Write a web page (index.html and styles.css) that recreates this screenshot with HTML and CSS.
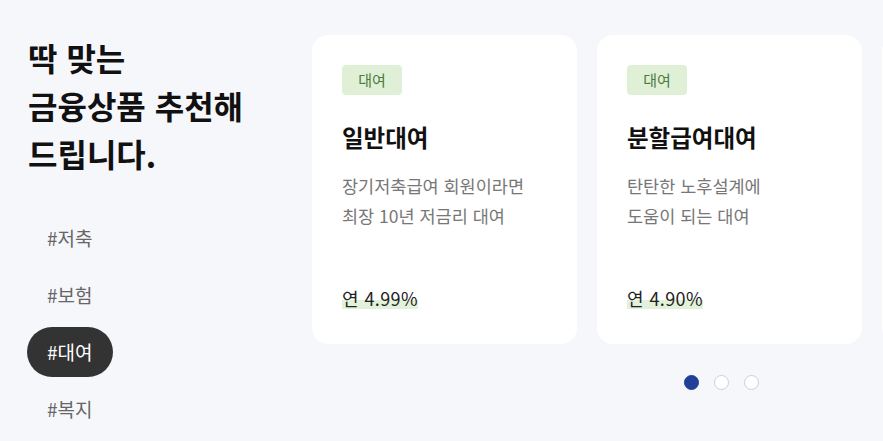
FILE: index.html
```html
<!DOCTYPE html>
<html lang="ko">
<head>
<meta charset="utf-8">
<link rel="stylesheet" href="styles.css">
</head>
<body>
<div class="page">
  <aside class="side">
    <h2 class="headline">딱 맞는<br>금융상품 추천해<br>드립니다.</h2>
    <ul class="menu">
      <li class="menu-item">#저축</li>
      <li class="menu-item">#보험</li>
      <li class="menu-item active">#대여</li>
      <li class="menu-item">#복지</li>
    </ul>
  </aside>
  <section class="carousel">
    <div class="track">
      <article class="card">
        <span class="tag">대여</span>
        <h3 class="card-title">일반대여</h3>
        <p class="card-desc">장기저축급여 회원이라면<br>최장 10년 저금리 대여</p>
        <div class="rate"><span class="rate-mark">연 4.99%</span></div>
      </article>
      <article class="card">
        <span class="tag">대여</span>
        <h3 class="card-title">분할급여대여</h3>
        <p class="card-desc">탄탄한 노후설계에<br>도움이 되는 대여</p>
        <div class="rate"><span class="rate-mark">연 4.90%</span></div>
      </article>
      <article class="card card-peek" aria-hidden="true"></article>
    </div>
    <div class="dots">
      <span class="dot on"></span>
      <span class="dot"></span>
      <span class="dot"></span>
    </div>
  </section>
</div>
</body>
</html>
```
FILE: styles.css
```css
* { box-sizing: border-box; }
html, body {
  margin: 0;
  padding: 0;
  background: #f6f7fb;
  font-family: "Noto Sans CJK KR", "Noto Sans", sans-serif;
  overflow: hidden;
}
.page {
  display: flex;
  width: 883px;
  height: 441px;
  overflow: hidden;
}
.side {
  width: 312px;
  flex: none;
  padding-left: 27px;
}
.headline {
  margin: 33px 0 0 1px;
  font-size: 32px;
  line-height: 48px;
  font-weight: 700;
  color: #111;
  letter-spacing: 0;
}
.menu {
  list-style: none;
  margin: 36px 0 0;
  padding: 0;
  display: flex;
  flex-direction: column;
  align-items: flex-start;
  gap: 7px;
}
.menu-item {
  height: 50px;
  line-height: 50px;
  padding: 0 20px;
  font-size: 19px;
  color: #666;
  border-radius: 25px;
}
.menu-item.active {
  background: #333;
  color: #fff;
}
.carousel {
  flex: 1;
  min-width: 0;
  padding-top: 35px;
}
.track {
  display: flex;
  gap: 20px;
}
.card {
  flex: none;
  width: 265px;
  height: 309px;
  background: #fff;
  border-radius: 16px;
  padding: 30px 30px 33px;
  display: flex;
  flex-direction: column;
  align-items: flex-start;
}
.tag {
  display: inline-block;
  width: 60px;
  height: 30px;
  line-height: 30px;
  text-align: center;
  font-size: 15px;
  color: #4d7a40;
  background: #dff0d7;
  border-radius: 4px;
}
.card-title {
  margin: 27px 0 0;
  font-size: 23.5px;
  line-height: 30px;
  font-weight: 700;
  color: #111;
}
.card-desc {
  margin: 19px 0 0;
  font-size: 17.5px;
  line-height: 30px;
  color: #777;
}
.rate {
  margin-top: auto;
}
.rate-mark {
  display: inline-block;
  font-size: 18px;
  line-height: 22px;
  color: #222;
  letter-spacing: 0.4px;
  background: linear-gradient(transparent 60%, #e2f1da 60%);
}
.dots {
  display: flex;
  gap: 15px;
  margin-top: 31px;
  padding-left: 372px;
}
.dot {
  width: 15px;
  height: 15px;
  border-radius: 50%;
  background: #fff;
  border: 1px solid #cfcfcf;
}
.dot.on {
  background: #1f3f99;
  border-color: #1f3f99;
}
```
